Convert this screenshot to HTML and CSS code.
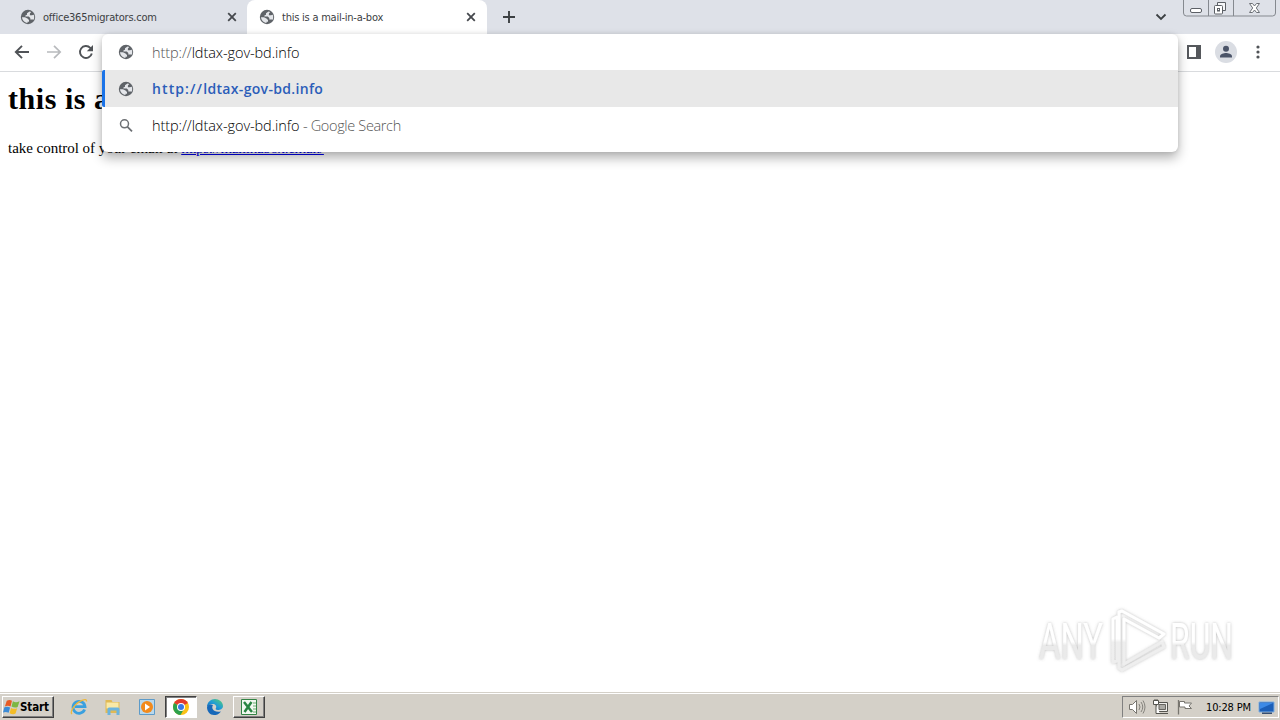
FILE: index.html
```html
<!DOCTYPE html>
<html lang="en">
<head>
<meta charset="utf-8">
<title>this is a mail-in-a-box</title>
<link rel="stylesheet" href="styles.css">
</head>
<body>
<svg class="defs" width="0" height="0">
  <symbol id="globe" viewBox="0 0 16 16">
    <circle cx="8" cy="8" r="7.200" fill="#5f6368"/>
    <path d="M9.500 2.400 7 4.300v1.400L5.400 6.400v1.200h3.400l1.500 1.300v1.500h2.500l.8.300c.4-.8.600-1.700.6-2.700 0-.8-.2-1.600-.5-2.300l-1.700.6H9.900V4.600l1.300-1.600zM2 8.200c.2 3 2.500 5.400 5.500 5.700v-1.200H9v-1.700L7.500 9.500 5 8.200z" fill="#e4e6ea"/>
  </symbol>
  <symbol id="close" viewBox="0 0 10 10"><path d="M1.200 1.200 8.800 8.800M8.800 1.200 1.200 8.800" stroke="#45484d" stroke-width="1.800"/></symbol>
</svg>
<div class="screen">
  <header class="tabstrip">
    <div class="tab">
      <svg class="favicon"><use href="#globe"/></svg>
      <span class="tab-title first">office365migrators.com</span>
      <svg class="tab-close"><use href="#close"/></svg>
    </div>
    <div class="tab active">
      <svg class="favicon"><use href="#globe"/></svg>
      <span class="tab-title second">this is a mail-in-a-box</span>
      <svg class="tab-close"><use href="#close"/></svg>
    </div>
    <svg class="new-tab" viewBox="0 0 14 14"><path d="M7 1v12M1 7h12" stroke="#3c4043" stroke-width="1.900"/></svg>
    <svg class="chevron" viewBox="0 0 12 8"><path d="M1.500 1.500 6 6l4.500-4.500" fill="none" stroke="#3c4043" stroke-width="1.800"/></svg>
    <svg class="window-buttons" viewBox="0 0 94 18">
      <path d="M.5 0v13q0 3 3 3h86q3 0 3-3V0M25.500 0v16M50.500 0v16" fill="none" stroke="#85898f"/>
      <rect x="7.500" y="8.500" width="11" height="4" rx="1.500" fill="#fff" stroke="#5c6066"/>
      <path d="M34.500 5V2.500h8v8H40" fill="#f5f6f8" stroke="#5c6066"/>
      <rect x="31.500" y="5.500" width="8" height="8.500" rx="1" fill="#fff" stroke="#5c6066"/>
      <rect x="34.500" y="8.500" width="2" height="2.500" fill="none" stroke="#5c6066"/>
      <path d="M66.500 3.500h3l2 2.500 2-2.500h3L73.300 8l3.200 4.500h-3l-2-2.500-2 2.500h-3L69.700 8z" fill="#fff" stroke="#6c7076"/>
    </svg>
  </header>
  <div class="toolbar">
    <svg class="nav" viewBox="0 0 16 16"><path d="M15 8H2M8 1.800 1.800 8 8 14.200" fill="none" stroke="#505357" stroke-width="1.900"/></svg>
    <svg class="nav" viewBox="0 0 16 16"><path d="M1 8h13M8 1.800 14.200 8 8 14.200" fill="none" stroke="#b8babd" stroke-width="1.700"/></svg>
    <svg class="nav" viewBox="0 0 16 16"><path d="M13.800 9.500A6 6 0 1 1 12.300 3.800L14 5.500" fill="none" stroke="#505357" stroke-width="1.900"/><path d="M15 1v6.200H8.800z" fill="#505357"/></svg>
    <svg class="side-panel" viewBox="0 0 14 14"><path d="M0 0h14v14H0zM2 2v10h7V2z" fill="#55585c" fill-rule="evenodd"/></svg>
    <svg class="profile" viewBox="0 0 22 22"><circle cx="11" cy="11" r="11" fill="#dadde3"/><circle cx="11" cy="7.800" r="3" fill="#4b5468"/><path d="M5 16.500v-1.300c0-2.200 4-3.300 6-3.300s6 1.100 6 3.300v1.300z" fill="#4b5468"/></svg>
    <svg class="menu" viewBox="0 0 4 14"><g fill="#505357"><circle cx="2" cy="2" r="1.600"/><circle cx="2" cy="7" r="1.600"/><circle cx="2" cy="12" r="1.600"/></g></svg>
  </div>
  <main class="page">
    <h1>this is a mail-in-a-box</h1>
    <p><span class="lead">take control of your email at </span><a class="link">https://mailinabox.email/</a></p>
    <svg class="watermark" viewBox="0 0 210 80">
      <defs><filter id="soft" x="-10%" y="-20%" width="120%" height="140%"><feDropShadow dx="0" dy="0" stdDeviation="1.800" flood-color="#777" flood-opacity=".5"/></filter>
      <linearGradient id="fade" x1="0" y1="0" x2="0" y2="1"><stop offset=".5" stop-color="#fff"/><stop offset=".56" stop-color="#eaeaea"/></linearGradient>
      <linearGradient id="mark-fade" gradientUnits="userSpaceOnUse" x1="0" y1="10" x2="0" y2="70"><stop offset=".48" stop-color="#fff"/><stop offset=".54" stop-color="#eee"/></linearGradient></defs>
      <g filter="url(#soft)">
        <g class="mark" fill="url(#fade)"><text x="8" y="59" textLength="64" lengthAdjust="spacingAndGlyphs">ANY</text><text x="139" y="59" textLength="63" lengthAdjust="spacingAndGlyphs">RUN</text></g>
        <g fill="none" stroke="url(#mark-fade)" stroke-width="3" stroke-linejoin="round"><path d="M86 17l-4 2v43l4-1z"/><path d="M91 11 133 34 128 38 93 19v45l38-22 2 5-42 23-3-2V12z"/></g>
      </g>
    </svg>
  </main>
  <footer class="taskbar">
    <div class="start">
      <svg viewBox="0 0 18 16"><path d="M4 1.500q3-2 5.500 0L8 7.500Q5 6 2 7.500z" fill="#e85b24"/><path d="M10.500 2q3 2 7 0L15.500 8q-3 1.500-6.500-.5z" fill="#7db743"/><path d="M1.500 8.300q3-1.500 6 .3L6 14q-3-1.500-6-.3z" fill="#3c8bd6"/><path d="M8.500 9q3.500 1.700 6.500.2L13.300 15q-3 1.500-6.300-.5z" fill="#f4bd27"/></svg>
      <span>Start</span>
    </div>
    <div class="task ie"><svg viewBox="0 0 18 18"><path d="M14.600 11.600A6 6 0 1 1 15 8.700H5" fill="none" stroke="#3aa0df" stroke-width="2.800"/><path d="M2 16C-.5 14 5 5 12 2.300q5-1.800 4.500 1.200" fill="none" stroke="#edb83c" stroke-width="1.300"/></svg></div>
    <div class="task"><svg viewBox="0 0 18 18"><path d="M1.500 2h6l1 2h7v11h-14z" fill="#e0b955"/><path d="M2.500 4.500h12v6h-12z" fill="#f9e9a6"/><path d="M3.500 17v-6q0-1.500 1.500-1.500h9q1.500 0 1.500 1.500v6h-3v-4.500h-6V17z" fill="#6bb4de"/></svg></div>
    <div class="task"><svg viewBox="0 0 18 18"><path d="M1.500 1.500h15v15h-15z" fill="#b9d8ec" stroke="#5d9bc9"/><circle cx="9" cy="9" r="6" fill="#f28a1c"/><path d="m7 5.500 5 3.500-5 3.500z" fill="#fff"/></svg></div>
    <div class="task pressed"><svg viewBox="0 0 18 18"><circle cx="9" cy="9" r="8" fill="#fbc116"/><path d="M9 9 2.100 5A8 8 0 0 1 15.900 5z" fill="#e33b2e"/><path d="M9 9 2.100 5A8 8 0 0 0 8.500 17l3.500-6z" fill="#2da14c"/><circle cx="9" cy="9" r="4" fill="#fff"/><circle cx="9" cy="9" r="3" fill="#3978e6"/></svg></div>
    <div class="task"><svg viewBox="0 0 18 18"><defs><linearGradient id="edge" x1="0" y1="1" x2="1" y2="0"><stop stop-color="#1261b2"/><stop offset=".5" stop-color="#209bd8"/><stop offset="1" stop-color="#5bd36b"/></linearGradient></defs><path d="M1 9C1 4 5 1 9 1s8 3 8 7c0 3-3 4-5 4s-3-1-2-2c1-2-1-4-3-4S2 7 1 9z" fill="url(#edge)"/><path d="M1 9c1-3 4-3 6-2-2 3 0 8 8 6.500-2 3-5 3.500-7 3.500-4 0-7-3.500-7-8z" fill="#1768b9"/></svg></div>
    <div class="task raised"><svg viewBox="0 0 18 18"><path d="M1.500 1.500h15v15h-15z" fill="#f2f8f0" stroke="#328344"/><path d="m4 4 8 10M11.500 4 4.500 14" stroke="#288441" stroke-width="2.500"/><path d="M13 5h3M13 8h3M13 11h3M13 14h3" stroke="#6bac71"/></svg></div>
    <div class="tray">
      <svg class="speaker" viewBox="0 0 18 16"><path d="M1.500 5.500h3l4-4v13l-4-4h-3z" fill="#fff" stroke="#77756f"/><path d="M11 5q2 3 0 6M13 3q3.500 5 0 10M15 1.500q4 6.500 0 13" fill="none" stroke="#85837d"/></svg>
      <svg class="network" viewBox="0 0 18 16"><path d="M4.500 3.500h11v9h-11zM8 14.500h8" fill="#efeeeb" stroke="#55544f"/><path d="M7 5.500h6.500v5H7z" fill="#aaa9a4" stroke="#66645f"/><path d="M1.500 1.500h5v4h-5zM3 0v1.500M5 0v1.500M4 6v8.500h4" fill="#fff" stroke="#55544f"/></svg>
      <svg class="flag" viewBox="0 0 18 16"><path d="M3.500 2.500h5v1.500h7L13 7l2.500 2.500h-6.500V8H3.500z" fill="#fff" stroke="#77756f"/><path d="M2.500 1v14.500" stroke="#77756f" stroke-width="1.300"/></svg>
      <span class="clock">10:28 PM</span>
      <svg class="monitor" viewBox="0 0 17 15"><path d="M1 2h15v10H1z" fill="#1c5fb8" stroke="#7faedf"/><path d="M2 3h13L2 9z" fill="#3d8ae6"/><path d="M4 12.500h10v1.500H4z" fill="#354d70"/></svg>
    </div>
  </footer>
  <section class="omnibox">
    <div class="row input"><svg class="row-icon"><use href="#globe"/></svg><span class="url"><span class="dim">http://</span>ldtax-gov-bd.info</span></div>
    <div class="row selected"><svg class="row-icon"><use href="#globe"/></svg><span class="match"><span class="scheme">http://</span>ldtax-gov-bd.info</span></div>
    <div class="row"><svg class="row-icon" viewBox="0 0 16 16"><circle cx="6.500" cy="5.800" r="4" fill="none" stroke="#6d7074" stroke-width="1.500"/><path d="m9.500 8.800 4.500 4.500" stroke="#6d7074" stroke-width="1.800"/></svg><span class="url">http://ldtax-gov-bd.info</span><span class="suffix">- Google Search</span></div>
  </section>
</div>
</body>
</html>
```
FILE: styles.css
```css
* { box-sizing: border-box; }
body { margin: 0; background: #fff; font-family: "Open Sans", "Noto Sans", sans-serif; }
svg { display: block; flex: none; }
.defs { position: absolute; }
.screen { position: relative; width: 1280px; height: 720px; display: flex; flex-direction: column; overflow: hidden; white-space: nowrap; }
.tabstrip { height: 34px; flex: none; display: flex; align-items: center; background: #dee1e8; }
.tab { width: 247px; height: 34px; padding: 0 10px 0 20px; display: flex; align-items: center; }
.tab.active { width: 240px; padding: 0 11px 0 12px; background: #fff; border-radius: 8px 8px 0 0; }
.favicon { width: 16px; height: 16px; margin-right: 7px; }
.tab-title { flex: 1; font: 11px "DejaVu Sans Condensed", "DejaVu Sans", sans-serif; color: #3c4043; }
.first { letter-spacing: -.21px; }
.second { letter-spacing: -.23px; }
.tab-close { width: 10px; height: 10px; }
.new-tab { width: 14px; height: 14px; margin-left: 15px; }
.chevron { width: 12px; height: 8px; margin-left: auto; }
.window-buttons { width: 94px; height: 18px; align-self: flex-start; margin: 0 3px 0 16px; }
.toolbar { height: 38px; flex: none; display: flex; align-items: center; padding: 0 20px 1px 14px; border-bottom: 1px solid #d9dbde; }
.nav { width: 16px; height: 16px; margin-right: 16px; }
.side-panel { width: 14px; height: 14px; margin-left: auto; }
.profile { width: 22px; height: 22px; margin: 0 19px 0 14px; }
.menu { width: 4px; height: 14px; }
.page { flex: 1; display: flex; flex-direction: column; padding: 9px 8px 0; color: #000; font-family: "Liberation Serif", serif; }
h1 { margin: 0; font-size: 30px; line-height: 36px; letter-spacing: .55px; }
p { margin: 22px 0 0; font-size: 15px; line-height: 18px; }
.lead { letter-spacing: -.03px; }
.link { color: #0000ee; text-decoration: underline; letter-spacing: -.31px; }
.watermark { width: 210px; height: 80px; margin: auto 31px 12px auto; overflow: visible; }
.mark { font: 50px Roboto, sans-serif; }
.taskbar { height: 28px; flex: none; display: flex; align-items: center; background: #d4d0c8; border-top: 1px solid #d4d0c8; box-shadow: inset 0 1px #fff; padding: 1px 1px 0 2px; }
.start { width: 52px; height: 22px; display: flex; align-items: center; padding-left: 0; border: 1px solid; border-color: #fff #404040 #404040 #fff; box-shadow: inset -1px -1px #808080; font: bold 11.500px "DejaVu Sans Condensed", sans-serif; letter-spacing: -.1px; color: #000; }
.start svg { width: 17px; height: 16px; }
.task { width: 32px; height: 22px; margin-right: 2px; display: grid; place-items: center; border: 1px solid transparent; }
.ie { margin-left: 9px; }
.task svg { width: 18px; height: 18px; }
.pressed { background: #fff; border-color: #404040 #fff #fff #404040; box-shadow: inset 1px 1px #808080; }
.raised { border-color: #fff #404040 #404040 #fff; box-shadow: inset -1px -1px #808080; }
.tray { width: 157px; height: 22px; margin-left: auto; display: flex; align-items: center; padding-left: 5px; border: 1px solid; border-color: #808080 #fff #fff #808080; }
.speaker, .network, .flag { width: 18px; height: 16px; margin-right: 6px; }
.clock { width: 46px; margin: 0 6px; font: 11px "DejaVu Sans Condensed", sans-serif; letter-spacing: -.15px; color: #000; }
.monitor { width: 17px; height: 15px; }
.omnibox { position: absolute; left: 102px; top: 34px; width: 1076px; height: 118px; background: #fff; border-radius: 6px; box-shadow: 0 6px 12px rgba(0,0,0,.3), 0 0 4px rgba(0,0,0,.1); color: #000; }
.row { height: 37px; display: flex; align-items: center; padding-left: 16px; font-size: 14.500px; font-weight: 300; }
.input { height: 36px; }
.selected { padding-left: 13px; background: #e8e8e8; border-left: 3px solid #1a73e8; border-radius: 2px 0 0 2px; }
.row-icon { width: 16px; height: 16px; margin-right: 18px; }
.url { width: 148px; letter-spacing: -.08px; }
.dim, .suffix { color: #555; }
.match { color: #2b5db9; font-size: 14px; font-weight: 600; letter-spacing: .33px; }
.scheme { letter-spacing: 1.1px; }
.suffix { margin-left: 3px; letter-spacing: -.35px; }
```
